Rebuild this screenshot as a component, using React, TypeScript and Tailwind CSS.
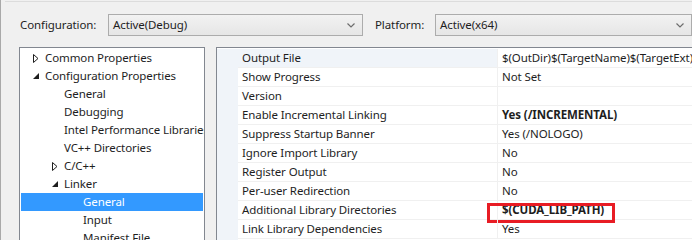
import React from 'react';

type TreeItem = {
    label: string;
    level: number;
    arrow?: 'open' | 'closed';
    selected?: boolean;
};

type Prop = {
    name: string;
    value: string;
    bold?: boolean;
    marked?: boolean;
};

const treeItems: TreeItem[] = [
    { label: 'Common Properties', level: 0, arrow: 'closed' },
    { label: 'Configuration Properties', level: 0, arrow: 'open' },
    { label: 'General', level: 1 },
    { label: 'Debugging', level: 1 },
    { label: 'Intel Performance Libraries', level: 1 },
    { label: 'VC++ Directories', level: 1 },
    { label: 'C/C++', level: 1, arrow: 'closed' },
    { label: 'Linker', level: 1, arrow: 'open' },
    { label: 'General', level: 2, selected: true },
    { label: 'Input', level: 2 },
    { label: 'Manifest File', level: 2 },
];

const props: Prop[] = [
    { name: 'Output File', value: '$(OutDir)$(TargetName)$(TargetExt)' },
    { name: 'Show Progress', value: 'Not Set' },
    { name: 'Version', value: '' },
    { name: 'Enable Incremental Linking', value: 'Yes (/INCREMENTAL)', bold: true },
    { name: 'Suppress Startup Banner', value: 'Yes (/NOLOGO)' },
    { name: 'Ignore Import Library', value: 'No' },
    { name: 'Register Output', value: 'No' },
    { name: 'Per-user Redirection', value: 'No' },
    { name: 'Additional Library Directories', value: '$(CUDA_LIB_PATH)', bold: true, marked: true },
    { name: 'Link Library Dependencies', value: 'Yes' },
];

const Chevron = () => (
    <svg width="8" height="5" viewBox="0 0 8 5" className="shrink-0">
        <path d="M0.5 0.5 L4 4 L7.5 0.5" fill="none" stroke="#6d6d6d" strokeWidth="1.2" />
    </svg>
);

const Arrow = ({ kind, selected }: { kind: 'open' | 'closed'; selected?: boolean }) => {
    const c = selected ? '#ffffff' : '#1e1e1e';
    if (kind === 'closed') {
        return (
            <svg width="6" height="9" viewBox="0 0 6 9">
                <path d="M0.5 0.5 L5 4.5 L0.5 8.5 Z" fill="none" stroke={c} strokeWidth="1" />
            </svg>
        );
    }
    return (
        <svg width="6" height="6" viewBox="0 0 6 6">
            <path d="M6 0 L6 6 L0 6 Z" fill={c} />
        </svg>
    );
};

const Combo = ({ value, width }: { value: string; width: string }) => (
    <div
        className={`${width} h-[22px] flex items-center justify-between border border-[#acacac] bg-gradient-to-b from-[#f2f2f2] to-[#e6e6e6] pl-[4px] pr-[7px]`}
    >
        <span className="text-[#1e1e1e]">{value}</span>
        <Chevron />
    </div>
);

export default function App() {
    return (
        <div className="w-[692px] h-[240px] overflow-hidden bg-[#f0f0f0] font-['Noto_Sans',sans-serif] text-[11.5px] tracking-[-0.1px] text-[#1e1e1e]">
            <div className="h-full border-l border-[#a9a9a9] pt-[1px]">
                <div className="h-full border-t border-[#dcdcdc] ml-[4px]">
                    {/* Top config bar */}
                    <div className="flex items-center h-[22px] mt-[12px] pl-[15px]">
                        <span className="w-[88px]">Configuration:</span>
                        <Combo value="Active(Debug)" width="w-[255px]" />
                        <span className="ml-[12px] w-[60px]">Platform:</span>
                        <Combo value="Active(x64)" width="w-[257px]" />
                    </div>

                    {/* Panels */}
                    <div className="flex mt-[11px] pl-[14px] gap-[11px] h-[200px]">
                        {/* Tree */}
                        <div className="w-[186px] shrink-0 border border-[#828790] bg-white px-[1px] pt-[1px] overflow-hidden">
                            {treeItems.map((item, i) => (
                                <div
                                    key={i}
                                    className={`flex items-center h-[18px] whitespace-nowrap ${
                                        item.selected ? 'bg-[#3399ff] text-white' : ''
                                    }`}
                                >
                                    <div className="shrink-0" style={{ width: item.level * 19 }} />
                                    <div className="w-[24px] shrink-0 flex justify-end pr-[6px]">
                                        {item.arrow && <Arrow kind={item.arrow} selected={item.selected} />}
                                    </div>
                                    <span>{item.label}</span>
                                </div>
                            ))}
                        </div>

                        {/* Property grid */}
                        <div className="flex-1 border-l border-t border-[#828790] bg-white flex pt-[1px] overflow-hidden">
                            <div className="w-[21px] shrink-0 bg-[#f0f4f9]" />
                            <div className="flex-1 min-w-0">
                                {props.map((p, i) => (
                                    <div key={i} className="flex h-[19px] border-b border-[#f0f0f0]">
                                        <div
                                            className={`w-[259px] shrink-0 pl-[4px] flex items-center whitespace-nowrap ${
                                                i === 0 ? 'bg-[#f0f4f9]' : ''
                                            }`}
                                        >
                                            {p.name}
                                        </div>
                                        <div className="relative flex-1 border-l border-[#f0f0f0] pl-[4px] flex items-center whitespace-nowrap">
                                            <span className={p.bold ? 'font-bold' : ''}>{p.value}</span>
                                            {p.marked && (
                                                <div className="absolute left-[-11px] top-[2px] w-[128px] h-[20px] border-[3px] border-[#e81c24]" />
                                            )}
                                        </div>
                                    </div>
                                ))}
                            </div>
                        </div>
                    </div>
                </div>
            </div>
        </div>
    );
}
